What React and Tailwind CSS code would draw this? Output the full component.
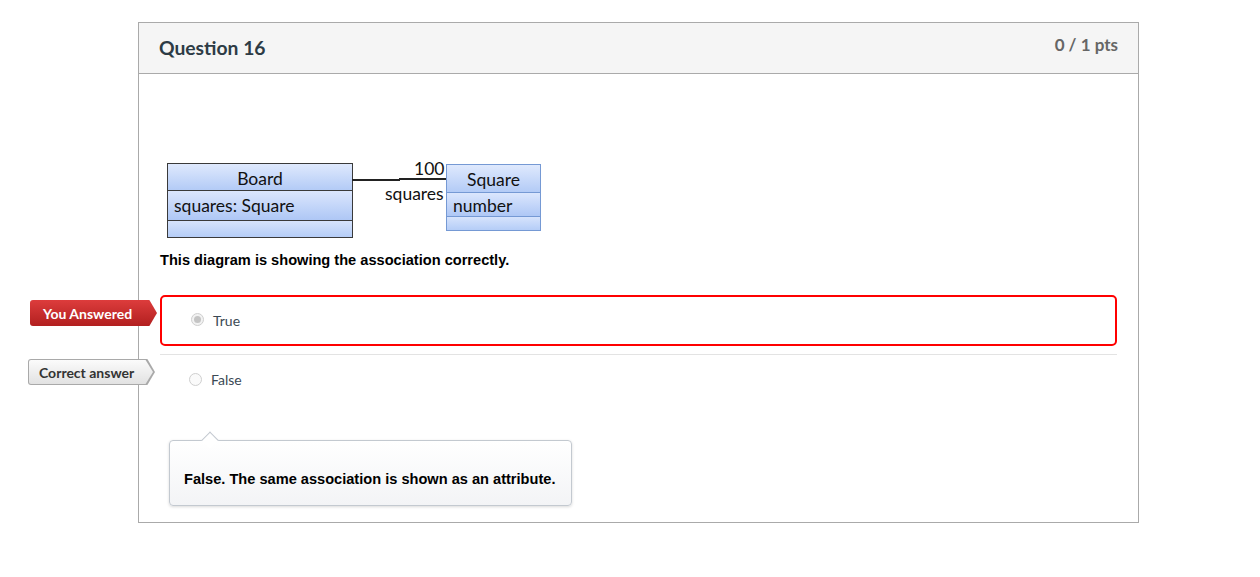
export default function App() {
  const lato = { fontFamily: "Lato, 'Open Sans', sans-serif" };
  const arial = { fontFamily: "'Liberation Sans', Arial, sans-serif" };
  return (
    <div className="w-[1260px] h-[577px] bg-white">
      <div className="w-[1001px] ml-[138px] pt-[22px]">
        <div className="border border-[#aaaaaa] bg-white">
          {/* header */}
          <div className="h-[51px] bg-[#f5f5f5] border-b border-[#aaaaaa] flex items-center justify-between pl-[20px] pr-[20px]" style={lato}>
            <div className="text-[19.3px] font-bold text-[#2d3b45] mt-[1px]">Question 16</div>
            <div className="text-[17px] font-bold text-[#666666] -mt-[7px]">0 / 1 pts</div>
          </div>
          {/* body */}
          <div className="px-[21px] pt-[89px] pb-[16px]">
            {/* UML diagram */}
            <div className="relative ml-[7px] h-[75px] w-[376px]" style={lato}>
              <div className="absolute left-0 top-0 w-[186px] h-[75px] border border-[#3a3a3a] flex flex-col text-[17.5px] text-[#111]">
                <div className="h-[27px] bg-gradient-to-b from-[#dfe9fd] to-[#b3cbf6] border-b border-[#3a3a3a] flex items-center justify-center leading-none pt-[3px]">Board</div>
                <div className="h-[30px] bg-gradient-to-b from-[#dbe6fd] to-[#aec7f5] border-b border-[#3a3a3a] flex items-center pl-[6px] leading-none">squares: Square</div>
                <div className="flex-1 bg-gradient-to-b from-[#d6e3fc] to-[#b5cdf7]"></div>
              </div>
              <div className="absolute left-[185px] top-[16px] w-[48px] h-[2px] bg-[#222]"></div>
              <div className="absolute left-[232px] top-[15px] w-[48px] h-[2px] bg-[#222]"></div>
              <div className="absolute left-[247px] top-[-4px] text-[17.5px] leading-[20px] text-[#111]">100</div>
              <div className="absolute left-[218px] top-[21px] text-[17.5px] leading-[20px] text-[#111]">squares</div>
              <div className="absolute left-[279px] top-[1px] w-[95px] h-[67px] border border-[#7599d4] flex flex-col text-[17.5px] text-[#111]">
                <div className="h-[28px] bg-gradient-to-b from-[#dfe9fd] to-[#b3cbf6] border-b border-[#7599d4] flex items-center justify-center leading-none pt-[2px]">Square</div>
                <div className="h-[24px] bg-gradient-to-b from-[#dbe6fd] to-[#aec7f5] border-b border-[#7599d4] flex items-center pl-[6px] leading-none pt-[3px]">number</div>
                <div className="flex-1 bg-gradient-to-b from-[#d6e3fc] to-[#b5cdf7]"></div>
              </div>
            </div>
            {/* question text */}
            <div className="mt-[12px] text-[14.6px] leading-[20px] font-bold text-black" style={arial}>
              This diagram is showing the association correctly.
            </div>
            {/* answers */}
            <div className="mt-[25px]" style={lato}>
              <div className="relative">
                <div className="absolute left-[-130px] top-[5px] flex items-center">
                  <div
                    className="h-[26px] w-[127px] bg-gradient-to-b from-[#dd3c3c] to-[#b21f1f] flex items-center pl-[13px] text-white text-[14px] font-bold"
                    style={{ clipPath: "polygon(0 0, 94% 0, 100% 50%, 94% 100%, 0 100%)", borderRadius: "3px 0 0 3px" }}
                  >
                    You Answered
                  </div>
                </div>
                <div className="h-[51px] border-2 border-[#ff0000] rounded-[5px] flex items-center pl-[29px]">
                  <span className="w-[13px] h-[13px] rounded-full border border-[#cfcfcf] bg-[#f2f2f2] flex items-center justify-center -mt-[2px]">
                    <span className="w-[7px] h-[7px] rounded-full bg-[#c4c4c4]"></span>
                  </span>
                  <span className="ml-[9px] text-[14px] text-[#3b4a55]">True</span>
                </div>
              </div>
              <div className="mt-[8px] border-t border-[#e3e3e3]"></div>
              <div className="relative h-[48px] flex items-center pl-[29px]">
                <div className="absolute left-[-132px] top-[4px]">
                  <div
                    className="h-[26px] w-[127px] flex items-center pl-[11px] text-[#333] text-[14px] font-bold"
                    style={{
                      clipPath: "polygon(0 0, 94% 0, 100% 50%, 94% 100%, 0 100%)",
                      background: "linear-gradient(#a9a9a9,#a9a9a9)",
                      borderRadius: "3px 0 0 3px",
                    }}
                  >
                    <div
                      className="absolute left-[1px] top-[1px] h-[24px] w-[124px] bg-gradient-to-b from-[#fbfbfb] to-[#e2e2e2]"
                      style={{ clipPath: "polygon(0 0, 94% 0, 100% 50%, 94% 100%, 0 100%)", borderRadius: "2px 0 0 2px" }}
                    ></div>
                    <span className="relative">Correct answer</span>
                  </div>
                </div>
                <span className="w-[13px] h-[13px] rounded-full border border-[#cfcfcf] bg-[#fafafa]"></span>
                <span className="ml-[9px] text-[14px] text-[#3b4a55]">False</span>
              </div>
              {/* comment */}
              <div className="relative ml-[9px] mt-[37px] w-[403px]">
                <div className="absolute left-[35px] top-[-6px] w-[12px] h-[12px] rotate-45 bg-white border-l border-t border-[#c3c9d0]"></div>
                <div className="h-[66px] rounded-[4px] border border-[#c3c9d0] bg-gradient-to-b from-white to-[#f3f4f6] shadow-[0_1px_3px_rgba(0,0,0,0.15)] pl-[14px] pt-[28px]">
                  <div className="text-[14.6px] leading-[20px] font-bold text-black" style={arial}>
                    False. The same association is shown as an attribute.
                  </div>
                </div>
                <div className="absolute left-[36px] top-[0px] w-[11px] h-[2px] bg-white"></div>
              </div>
            </div>
          </div>
        </div>
      </div>
    </div>
  );
}
